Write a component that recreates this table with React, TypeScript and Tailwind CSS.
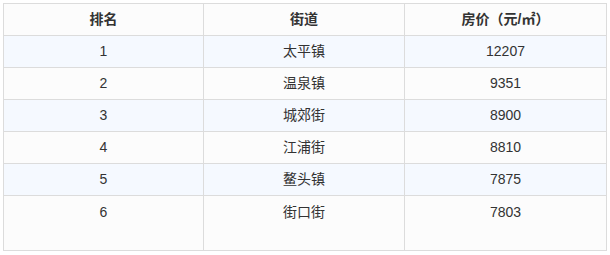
import React from "react";

const rows = [
  ["1", "太平镇", "12207"],
  ["2", "温泉镇", "9351"],
  ["3", "城郊街", "8900"],
  ["4", "江浦街", "8810"],
  ["5", "鳌头镇", "7875"],
  ["6", "街口街", "7803"],
];

export default function App() {
  return (
    <div
      className="w-[610px] h-[255px] bg-white p-[3px] text-[14px] text-[#333]"
      style={{ fontFamily: '"Liberation Sans", "Noto Sans CJK SC", sans-serif' }}
    >
      <div className="w-[604px] h-[248px] border border-[#dcdcdc] bg-[#fcfcfc] flex flex-col">
        <div className="grid grid-cols-[200px_201px_1fr] h-[32px] border-b border-[#dcdcdc] font-bold">
          <div className="border-r border-[#dcdcdc] flex items-center justify-center">排名</div>
          <div className="border-r border-[#dcdcdc] flex items-center justify-center">街道</div>
          <div className="flex items-center justify-center">房价（元/㎡）</div>
        </div>
        {rows.map((r, i) => {
          const last = i === rows.length - 1;
          return (
            <div
              key={i}
              className={
                "grid grid-cols-[200px_201px_1fr] " +
                (last ? "flex-1 " : "h-[32px] border-b border-[#dcdcdc] ") +
                (i % 2 === 0 ? "bg-[#f5f9ff]" : "bg-[#fcfcfc]")
              }
            >
              {r.map((c, j) => (
                <div
                  key={j}
                  className={
                    "flex justify-center " +
                    (last ? "items-start pt-[6px] " : "items-center ") +
                    (j < 2 ? "border-r border-[#dcdcdc]" : "")
                  }
                >
                  {c}
                </div>
              ))}
            </div>
          );
        })}
      </div>
    </div>
  );
}
